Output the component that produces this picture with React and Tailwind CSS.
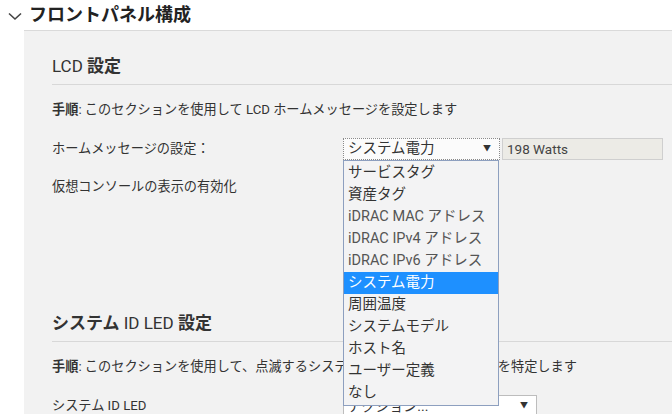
import React from "react";

const font = { fontFamily: 'Roboto, "Noto Sans CJK JP", sans-serif' };

const items = [
  "サービスタグ",
  "資産タグ",
  "iDRAC MAC アドレス",
  "iDRAC IPv4 アドレス",
  "iDRAC IPv6 アドレス",
  "システム電力",
  "周囲温度",
  "システムモデル",
  "ホスト名",
  "ユーザー定義",
  "なし",
];

export default function App() {
  return (
    <div
      className="relative w-[672px] h-[414px] overflow-hidden bg-white text-[#333]"
      style={font}
    >
      {/* header */}
      <div className="flex h-[30px] items-center pl-[7px]">
        <svg width="16" height="10" viewBox="0 0 16 10" className="mr-[6px] mt-[2px]">
          <path d="M2 2.5 L8 8 L14 2.5" fill="none" stroke="#444" strokeWidth="1.6" />
        </svg>
        <span className="text-[18px] font-bold leading-[24px] text-[#222]">フロントパネル構成</span>
      </div>

      {/* panel */}
      <div className="ml-[24px] h-[384px] border-t border-[#dadada] bg-[#f2f2f2] pl-[28px]">
        <div className="border-b border-[#d8d8d8] pt-[23px] pb-[6px] text-[17px] leading-[24px]">
          LCD <span className="font-bold">設定</span>
        </div>
        <div className="mt-[15px] text-[13.2px] leading-[20px]">
          <span className="font-bold">手順</span>: このセクションを使用して LCD ホームメッセージを設定します
        </div>
        <div className="mt-[18px] flex h-[22px] items-center text-[13.2px]">
          <div className="w-[291px]">ホームメッセージの設定：</div>
          <div className="flex h-[22px] w-[157px] items-center justify-between border border-dotted border-[#8a8a8a] bg-[#fbfbfb] pl-[4px] pr-[8px] text-[14.5px]">
            <span>システム電力</span>
            <span className="text-[8px]">▼</span>
          </div>
          <div className="ml-[2px] flex h-[22px] w-[161px] items-center border border-[#cfcfcf] bg-[#ecebe6] pl-[4px] text-[13.5px] text-[#444]">
            198 Watts
          </div>
        </div>
        <div className="mt-[17px] text-[13.2px] leading-[20px]">仮想コンソールの表示の有効化</div>

        <div className="mt-[114px] border-b border-[#d8d8d8] pb-[6px] text-[17px] leading-[24px]">
          <span className="font-bold">システム</span> ID LED <span className="font-bold">設定</span>
        </div>
        <div className="mt-[15px] whitespace-nowrap text-[13.2px] leading-[20px]">
          <span className="font-bold">手順</span>: このセクションを使用して、点滅するシステム ID LED でサーバー本体を特定します
        </div>
        <div className="mt-[18px] flex h-[22px] items-center text-[13.2px]">
          <div className="w-[291px]">システム ID LED</div>
          <div className="flex h-[22px] w-[194px] items-center justify-between border border-[#bdbdbd] bg-white pl-[4px] pr-[8px] text-[14px]">
            <span>アクション...</span>
            <span className="text-[8px]">▼</span>
          </div>
        </div>
      </div>

      {/* dropdown list */}
      <div className="absolute left-[343px] top-[160px] w-[156px] border border-[#8d9fbf] bg-[#f3f3f4] py-[1px]">
        {items.map((t) => (
          <div
            key={t}
            className={
              "h-[22px] pl-[4px] text-[14.5px] leading-[22px] " +
              (t === "システム電力" ? "bg-[#1e90ff] text-white" : t.startsWith("iDRAC") ? "text-[#555]" : "text-[#333]")
            }
          >
            {t}
          </div>
        ))}
      </div>
    </div>
  );
}
